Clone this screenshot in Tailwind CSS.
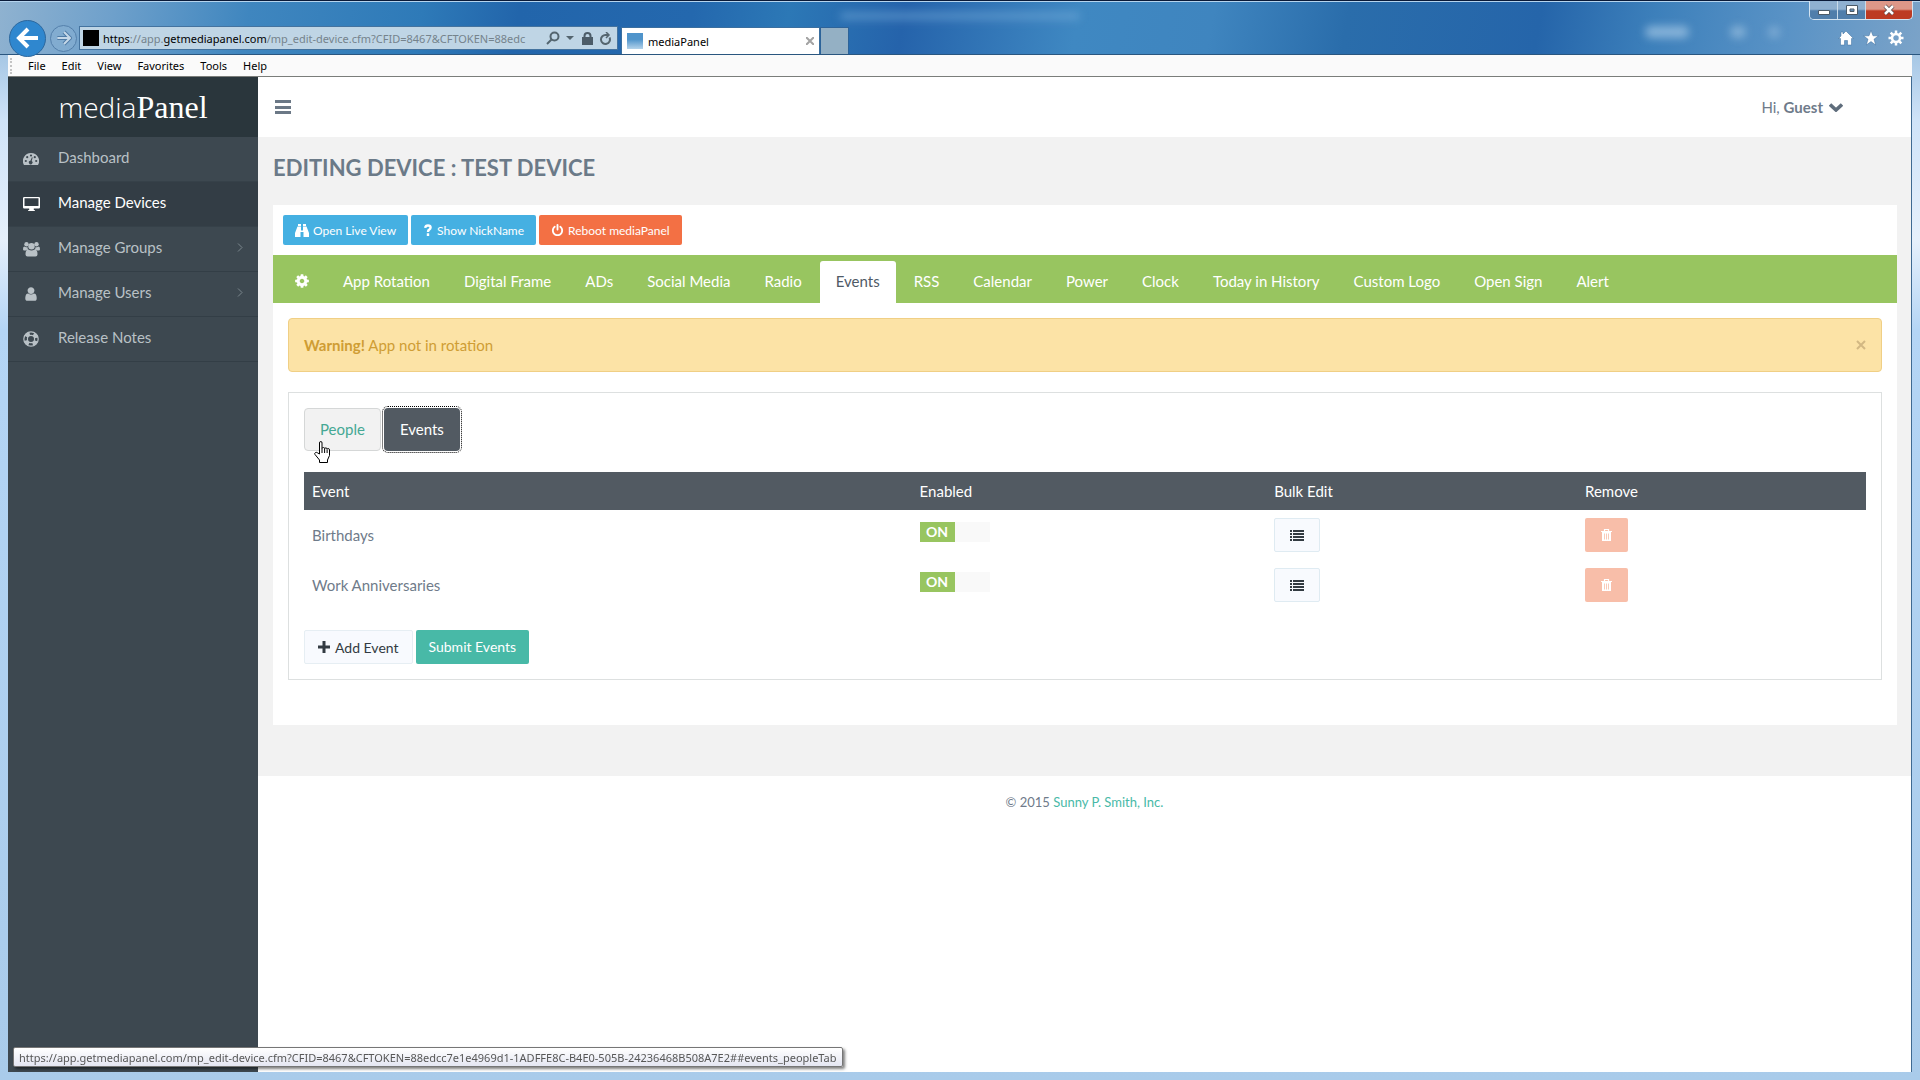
<!DOCTYPE html>
<html lang="en">
  <head>
    <meta charset="UTF-8" />
    <meta name="viewport" content="width=device-width, initial-scale=1.0" />
    <title>mediaPanel</title>
    <script src="https://cdn.jsdelivr.net/npm/@tailwindcss/browser@4"></script>
  </head>
  <body class="min-h-screen flex flex-col overflow-hidden bg-[linear-gradient(180deg,#7fb0d8_0px,#a9c9e6_60px,#cfe3f8_120px,#e6f0fb_240px,#b4d5f5_330px,#a9cbea_100%)] border-t border-[#0a1a38] px-2 pb-2 font-['Lato',sans-serif] text-[15px] leading-[21px] text-[#6f7b8a]">

    <!-- Browser window frame -->
    <header class="relative -mx-2 h-[54px] flex border-t border-[#b5d4ee] border-b border-b-[#2a567f] pl-[9px] pr-4 bg-[linear-gradient(100deg,#8fb2d0_0%,#6ea0cb_6%,#3f86bf_13%,#2e7ab8_22%,#2265ab_27%,#2468ae_36%,#2c78b6_41%,#2563ab_47%,#3f88c2_56%,#3f85bf_63%,#2a6dab_70%,#2565aa_80%,#3d80bb_86%,#5a93c6_93%,#7ba3c8_100%)] font-['Noto_Sans',sans-serif]">
      <div class="absolute left-[840px] top-2.5 h-2 w-60 rounded-full bg-[#78aedc]/50 blur-xs"></div>
      <div class="absolute left-[1645px] top-6 h-3 w-11 rounded-full bg-[#b6d3ec]/60 blur-xs"></div>
      <div class="absolute left-[1730px] top-6 h-3 w-4 rounded-full bg-[#b6d3ec]/50 blur-xs"></div>
      <div class="absolute left-[1768px] top-6 h-3 w-3 rounded-full bg-[#b6d3ec]/40 blur-xs"></div>

      <nav class="relative flex items-center pt-5 w-full">
        <button type="button" aria-label="Back" class="size-[37px] shrink-0 rounded-full bg-[#2f87cf] border border-[#2d689e] flex items-center justify-center">
          <svg class="size-6" viewBox="0 0 24 24" fill="none" stroke="#fff" stroke-width="4"><path d="M22 12H4M12 3L3 12l9 9" /></svg>
        </button>
        <button type="button" aria-label="Forward" class="ml-1 size-[27px] shrink-0 rounded-full bg-[#86afd2]/60 border border-[#5480ab] flex items-center justify-center">
          <svg class="size-4" viewBox="0 0 24 24" fill="none"><path d="M2 12h17M12 3l9 9-9 9" stroke="#4f7ba6" stroke-width="6" /><path d="M2 12h18M12 3l9 9-9 9" stroke="#c5d8e8" stroke-width="3" /></svg>
        </button>
        <div class="ml-[2px] w-[539px] h-6 shrink-0 flex items-center gap-1 border border-[#44739f] bg-[#bfd5e5] px-[3px]">
          <span class="size-4 shrink-0 bg-black"></span>
          <p class="flex-1 overflow-hidden whitespace-nowrap text-[11px] text-[#75838c]"><span class="text-black">https</span>://app.<span class="text-black">getmediapanel.com</span>/mp_edit-device.cfm?CFID=8467&amp;CFTOKEN=88edc</p>
          <svg class="size-[14px] shrink-0" viewBox="0 0 14 14" fill="none" stroke="#54656f" stroke-width="2"><circle cx="8.500" cy="5.500" r="4" /><path d="M5.500 8.500L1 13" /></svg>
          <svg class="ml-[2px] w-2 h-2 shrink-0" viewBox="0 0 8 8" fill="#54656f"><path d="M0 2h8L4 6z" /></svg>
          <svg class="ml-1 w-[11px] h-[13px] shrink-0" viewBox="0 0 11 13"><rect y="5" width="11" height="8" fill="#4c5c68" /><path d="M2.500 6V4a3 3 0 016 0v2" fill="none" stroke="#4c5c68" stroke-width="2" /></svg>
          <svg class="mx-[2px] size-[13px] shrink-0" viewBox="0 0 13 13" fill="none" stroke="#54656f" stroke-width="2"><path d="M10.500 5.500A4.500 4.500 0 1 1 7 3h2" /><path d="M7 0l3 3-3 3" stroke-width="1.500" /></svg>
        </div>
        <div class="ml-[3px] w-[199px] h-[27px] shrink-0 self-end flex items-center gap-[5px] bg-white border border-b-0 border-[#3b6f9f] px-[5px] text-[11px] text-black">
          <span class="size-4 bg-linear-to-b from-[#4f94cb] from-40% to-[#b4d3ea]"></span>
          <span class="flex-1">mediaPanel</span>
          <button type="button" aria-label="Close tab"><svg class="size-2" viewBox="0 0 8 8" stroke="#a3a3a3" stroke-width="2"><path d="M0 0l8 8M8 0L0 8" /></svg></button>
        </div>
        <button type="button" aria-label="New tab" class="w-[29px] h-[27px] shrink-0 self-end bg-[#94b0c4] border border-b-0 border-[#2d6399]"></button>
        <div class="ml-auto flex items-center gap-[9px]">
          <button type="button" aria-label="Home"><svg class="size-4" viewBox="0 0 16 16" fill="#fff" stroke="#3b6c9c" stroke-width=".5"><path d="M8 1l7.500 7.500H13.500V15H9.500v-4.500h-3V15h-4V8.500H.5L3 6V2h2v2z" /></svg></button>
          <button type="button" aria-label="Favorites"><svg class="size-4" viewBox="0 0 16 16" fill="#fff" stroke="#3b6c9c" stroke-width=".5"><path d="M8 .5l2 5.300h5.500L11 9.200l1.700 5.800L8 11.600 3.300 15 5 9.200.5 5.800H6z" /></svg></button>
          <button type="button" aria-label="Settings"><svg class="size-4" viewBox="0 0 16 16" fill="none" stroke="#fff"><circle cx="8" cy="8" r="4" stroke-width="2.500" /><path d="M8 .5v3M8 12.500v3M.5 8h3M12.500 8h3M2.700 2.700l2 2M11.300 11.300l2 2M2.700 13.300l2-2M11.300 4.700l2-2" stroke-width="2.500" /></svg></button>
        </div>
      </nav>

      <div class="absolute right-[7px] -top-px h-[19px] flex rounded-b-[5px] border border-t-0 border-[#d3e3f1] overflow-hidden divide-x divide-[#c9dbea]">
        <button type="button" aria-label="Minimize" class="w-7 flex items-center justify-center bg-linear-to-b from-[#8fb0d0] from-45% to-[#507eab] to-55%"><svg class="w-3 h-3" viewBox="0 0 12 12"><path d="M.5 6.500h11v4H.5z" fill="#fff" stroke="#4b5a68" /></svg></button>
        <button type="button" aria-label="Maximize" class="w-7 flex items-center justify-center bg-linear-to-b from-[#8fb0d0] from-45% to-[#507eab] to-55%"><svg class="w-3 h-3" viewBox="0 0 12 12"><path d="M.5 1.500h11v9H.5zM4 5v2.500h4V5z" fill="#fff" fill-rule="evenodd" stroke="#4b5a68" /></svg></button>
        <button type="button" aria-label="Close" class="w-[46px] flex items-center justify-center bg-linear-to-b from-[#dd9788] from-45% to-[#bd3a22] to-55%"><svg class="w-3 h-3" viewBox="0 0 12 12" fill="none"><path d="M2 2l8 8M10 2l-8 8" stroke="#5b4a4a" stroke-width="4" /><path d="M2 2l8 8M10 2l-8 8" stroke="#fff" stroke-width="2.500" /></svg></button>
      </div>
    </header>

    <!-- Menu bar -->
    <nav class="h-[22px] flex items-center gap-4 bg-[#fafafa] border-b border-[#7a7d7a] pl-[2px] font-['Noto_Sans',sans-serif] text-[11px] leading-4 text-black">
      <span class="h-4 border-l-2 border-dotted border-[#c4c4c4]"></span>
      <button type="button">File</button>
      <button type="button">Edit</button>
      <button type="button">View</button>
      <button type="button">Favorites</button>
      <button type="button">Tools</button>
      <button type="button">Help</button>
    </nav>

    <div class="flex-1 flex bg-white border-r border-[#3f6a92]">
      <!-- Sidebar -->
      <aside class="w-[250px] shrink-0 bg-[#3d4850] text-[#b9c1c6]">
        <a href="#" class="h-[60px] flex items-center justify-center bg-[#2a363c] text-white leading-8"><span class="font-light font-['Open_Sans',sans-serif] text-[28px]">media</span><span class="font-['Liberation_Serif',serif] text-[32px]">Panel</span></a>
        <ul>
          <li>
            <a href="#" class="h-[45px] flex items-center gap-[19px] px-[15px] pb-1 border-b border-[#364149]">
              <svg class="size-4 mt-1" viewBox="0 0 16 16" fill="currentColor"><path d="M8 2a8 8 0 00-7 12h14A8 8 0 008 2z" /><g fill="#3d4850"><circle cx="8" cy="4.500" r="1.100" /><circle cx="4.200" cy="6.200" r="1.100" /><circle cx="2.800" cy="10" r="1.100" /><circle cx="13.200" cy="10" r="1.100" /><circle cx="11.800" cy="6.200" r="1.100" /><path d="M9.700 6.500l-1 3.600a1.800 1.800 0 11-1.300-.3l1.500-3.500z" /></g></svg>
              Dashboard
            </a>
          </li>
          <li>
            <a href="#" class="h-[45px] flex items-center gap-[19px] px-[15px] pb-1 bg-[#333d45] border-b border-[#364149] text-white">
              <svg class="w-[17px] h-4 mt-1 -mr-px" viewBox="0 0 17 16" fill="currentColor"><path d="M1.200 1h14.600q1.200 0 1.200 1.200v9q0 1.300-1.200 1.300h-5v1.500h1v1H5.200v-1h1v-1.500h-5Q0 12.500 0 11.200v-9Q0 1 1.200 1zM1.500 2.300v7.700h14V2.300z" fill-rule="evenodd" /></svg>
              Manage Devices
            </a>
          </li>
          <li>
            <a href="#" class="h-[45px] flex items-center gap-[19px] px-[15px] pb-1 border-b border-[#333e46]">
              <svg class="w-[17px] h-4 mt-1 -mr-px" viewBox="0 0 17 16" fill="currentColor"><circle cx="3.500" cy="3.200" r="2.200" /><circle cx="13.500" cy="3.200" r="2.200" /><circle cx="8.500" cy="5.200" r="3.200" /><path d="M4.500 6q-.2 1.500.8 2.500-1.500 0-2.300 1H1.200Q0 9.500 0 8.200 0 5.500 1.200 5.500 3 6.800 4.500 6zM12.500 6q.2 1.500-.8 2.500 1.500 0 2.300 1h1.800q1.200 0 1.200-1.300 0-2.700-1.200-2.700-1.800 1.300-3.300.5zM5.500 8.500q3 2 6 0 3 0 3 4.500 0 2.500-2 2.500h-8q-2 0-2-2.500 0-4.500 3-4.500z" /></svg>
              <span class="flex-1">Manage Groups</span>
              <svg class="w-[6px] h-[9px]" viewBox="0 0 6 9" fill="none" stroke="#7d878d"><path d="M1 .5l4 4-4 4" /></svg>
            </a>
          </li>
          <li>
            <a href="#" class="h-[45px] flex items-center gap-[19px] px-[15px] pb-1 border-b border-[#333e46]">
              <svg class="size-4 mt-1" viewBox="0 0 1792 1792" fill="currentColor"><path d="M1536 1399q0 109-62.500 187t-150.500 78h-854q-88 0-150.500-78t-62.500-187q0-85 8.500-160.500t31.500-152 58.500-131 94-89 134.500-34.500q131 128 313 128t313-128q76 0 134.500 34.500t94 89 58.500 131 31.500 152 8.500 160.500zm-256-887q0 159-112.500 271.500t-271.500 112.500-271.500-112.500-112.500-271.500 112.500-271.500 271.500-112.500 271.500 112.500 112.500 271.500z" /></svg>
              <span class="flex-1">Manage Users</span>
              <svg class="w-[6px] h-[9px]" viewBox="0 0 6 9" fill="none" stroke="#7d878d"><path d="M1 .5l4 4-4 4" /></svg>
            </a>
          </li>
          <li>
            <a href="#" class="h-[45px] flex items-center gap-[19px] px-[15px] pb-1 border-b border-[#333e46]">
              <svg class="size-4 mt-1" viewBox="0 0 16 16" fill="none" stroke="currentColor"><circle cx="8" cy="8" r="7.200" stroke-width="1.200" /><circle cx="8" cy="8" r="3.600" stroke-width="1.200" /><circle cx="8" cy="8" r="5.500" stroke-width="3.800" stroke-dasharray="4.640 4" stroke-dashoffset="-2" /></svg>
              Release Notes
            </a>
          </li>
        </ul>
      </aside>

      <main class="flex-1 min-w-0">
        <!-- Top bar -->
        <div class="h-[60px] flex items-center justify-between pl-[17px] pr-[68px]">
          <button type="button" aria-label="Toggle menu"><svg class="w-4 h-4" viewBox="0 0 16 16" fill="#6b7886"><path d="M0 1h16v3H0zM0 7h16v3H0zM0 12h16v3H0z" /></svg></button>
          <button type="button" class="flex items-center gap-[6px]"><span>Hi, <b>Guest</b></span><svg class="w-[14px] h-[9px]" viewBox="0 0 14 9" fill="none" stroke="#5f6d7c" stroke-width="3.600"><path d="M1 1.500l6 5.500 6-5.500" /></svg></button>
        </div>

        <div class="bg-[#f2f2f2] pl-[15px] pr-[14px] pb-[51px]">
          <h1 class="h-[68px] pt-[17px] text-[22px] leading-7 font-bold text-[#6b7a88]">EDITING DEVICE : TEST DEVICE</h1>

          <section class="bg-white pt-[10px] pb-[45px]">
            <div class="flex gap-[3px] px-[10px] pb-[10px] text-[12px] text-white">
              <button type="button" class="h-[30px] flex items-center gap-1 rounded-[2px] bg-[#45b0e2] px-3">
                <svg class="w-[14px] h-[13px]" viewBox="0 0 14 13" fill="currentColor"><path d="M3 0h3v2H3zM8 0h3v2H8zM2.500 2.500H6v4h2v-4h3.500L14 9v4H8.500V8h-3v5H0V9z" /></svg>
                Open Live View
              </button>
              <button type="button" class="h-[30px] flex items-center gap-1 rounded-[2px] bg-[#45b0e2] px-3">
                <svg class="w-[10px] h-3" viewBox="0 0 10 12" fill="none" stroke="currentColor" stroke-width="2.400"><path d="M2.200 3.800Q2.500 1.500 5 1.500t2.600 2q0 1.300-1.400 2.100Q5 6.200 5 8M5 9.300V12" /></svg>
                Show NickName
              </button>
              <button type="button" class="h-[30px] flex items-center gap-1 rounded-[2px] bg-[#f37044] px-3">
                <svg class="size-[13px]" viewBox="0 0 1792 1792" fill="currentColor"><path d="M1664 896q0 156-61 298t-164 245-245 164-298 61-298-61-245-164-164-245-61-298q0-182 80.500-343t226.500-270q43-32 95.500-25t83.500 50q32 42 24.500 94.500t-49.500 84.500q-98 74-151.500 181t-53.500 228q0 104 40.500 198.500t109.500 163.500 163.500 109.500 198.500 40.500 198.500-40.500 163.500-109.500 109.500-163.500 40.500-198.500q0-121-53.500-228t-151.500-181q-42-32-49.500-84.500t24.500-94.500q31-43 84-50t95 25q146 109 226.500 270t80.500 343zm-640-768v640q0 52-38 90t-90 38-90-38-38-90v-640q0-52 38-90t90-38 90 38 38 90z" /></svg>
                Reboot mediaPanel
              </button>
            </div>

            <nav class="h-12 flex items-end gap-[2px] bg-[#98c560] pl-[6px] text-white *:h-[42px] *:flex *:items-center *:px-4 *:pb-[2px] *:rounded-t-[3px]">
              <a href="#" aria-label="Settings"><svg class="w-[14px] h-4" viewBox="128 0 1536 1792" fill="currentColor"><path d="M1152 896q0-106-75-181t-181-75-181 75-75 181 75 181 181 75 181-75 75-181zm512-109v222q0 12-8 23t-20 13l-185 28q-19 54-39 91 35 50 107 138 10 12 10 25t-9 23q-27 37-99 108t-94 71q-12 0-26-9l-138-108q-44 23-91 38-16 136-29 186-7 28-36 28h-222q-14 0-24.500-8.500t-11.500-21.500l-28-184q-49-16-90-37l-141 107q-10 9-25 9-14 0-25-11-126-114-165-168-7-10-7-23 0-12 8-23 15-21 51-66.500t54-70.500q-27-50-41-99l-183-27q-13-2-21-12.500t-8-23.500v-222q0-12 8-23t19-13l186-28q14-46 39-92-40-57-107-138-10-12-10-24 0-10 9-23 26-36 98.500-107.500t94.500-71.500q13 0 26 10l138 107q44-23 91-38 16-136 29-186 7-28 36-28h222q14 0 24.500 8.500t11.500 21.500l28 184q49 16 90 37l142-107q9-9 24-9 13 0 25 10 129 119 165 170 7 8 7 22 0 12-8 23-15 21-51 66.500t-54 70.500q26 50 41 98l183 28q13 2 21 12.500t8 23.500z" /></svg></a>
              <a href="#">App Rotation</a>
              <a href="#">Digital Frame</a>
              <a href="#">ADs</a>
              <a href="#">Social Media</a>
              <a href="#">Radio</a>
              <a href="#" aria-current="page" class="bg-white text-[#4f5a66]">Events</a>
              <a href="#">RSS</a>
              <a href="#">Calendar</a>
              <a href="#">Power</a>
              <a href="#">Clock</a>
              <a href="#">Today in History</a>
              <a href="#">Custom Logo</a>
              <a href="#">Open Sign</a>
              <a href="#">Alert</a>
            </nav>

            <div class="px-[15px] pt-[15px]">
              <div role="alert" class="h-[54px] flex items-center justify-between rounded-[4px] border border-[#f0cf85] bg-[#fce3a6] px-[15px] text-[#cf9d34]">
                <p><b>Warning!</b> App not in rotation</p>
                <button type="button" aria-label="Dismiss"><svg class="size-[10px]" viewBox="0 0 10 10" stroke="#d2b883" stroke-width="2"><path d="M1 1l8 8M9 1L1 9" /></svg></button>
              </div>

              <div class="mt-5 border border-[#dde0e0] px-[15px] py-[15px]">
                <div class="relative flex gap-[3px]">
                  <a href="#events_peopleTab" class="h-[43px] flex items-center rounded-[4px] border border-[#d5d7d7] bg-[#f2f2f2] px-[15px] pb-px text-[#45a894]">People</a>
                  <a href="#" class="h-[43px] flex items-center rounded-[4px] bg-[#525a62] px-4 pb-px text-white outline-1 outline-offset-1 outline-dotted outline-black">Events</a>
                  <!-- Hand pointer -->
                  <svg class="absolute left-[10px] top-[33px] w-[18px] h-[22px]" viewBox="0 0 18 22" fill="#fff" stroke="#000" stroke-linejoin="round"><path d="M5.500 13V2q0-1.500 1.300-1.500T8 2v5.500q.2-1 1.400-1t1.200 1.200q.2-.8 1.300-.8t1.200 1.300q.2-.7 1.200-.7T15.500 9v5.500L13.500 19v2.500h-8V19L1 13.500Q.2 12 1.500 11.500t2.300.5zM8 7.500V12M10.600 8v4M13.100 8.500V12" /></svg>
                </div>

                <table class="mt-[21px] w-full table-fixed text-left">
                  <thead class="bg-[#525a62] text-white">
                    <tr class="h-[38px] *:px-2 *:font-normal">
                      <th class="w-[38.9%]">Event</th>
                      <th class="w-[22.7%]">Enabled</th>
                      <th class="w-[19.9%]">Bulk Edit</th>
                      <th>Remove</th>
                    </tr>
                  </thead>
                  <tbody id="events"></tbody>
                </table>

                <div class="mt-5 flex gap-[3px] text-[14px]">
                  <button type="button" class="h-[34px] flex items-center gap-[5px] rounded-[2px] border border-[#e6eef3] bg-[#f8fafe] px-[13px] text-[#333b42]">
                    <svg class="w-3 h-3" viewBox="0 0 12 12" fill="currentColor"><path d="M4.500 0h3v4.500H12v3H7.500V12h-3V7.500H0v-3h4.500z" /></svg>
                    Add Event
                  </button>
                  <button type="submit" class="h-[34px] rounded-[2px] bg-[#48b9a7] px-[13px] pb-px text-white">Submit Events</button>
                </div>
              </div>
            </div>
          </section>
        </div>

        <footer class="py-4 text-center text-[13px]">&copy; 2015 <a href="#" class="text-[#48b9a7]">Sunny P. Smith, Inc.</a></footer>
      </main>
    </div>

    <!-- Link target -->
    <div class="fixed left-[13px] bottom-[13px] h-5 flex items-center rounded-[2px] border border-[#767676] bg-linear-to-b from-white to-[#e4e6f2] px-[5px] font-['Noto_Sans',sans-serif] text-[11px] text-[#575757] shadow-[2px_2px_3px_rgba(0,0,0,0.5)]">https://app.getmediapanel.com/mp_edit-device.cfm?CFID=8467&amp;CFTOKEN=88edcc7e1e4969d1-1ADFFE8C-B4E0-505B-24236468B508A7E2##events_peopleTab</div>

    <script>
      const events = ["Birthdays", "Work Anniversaries"];

      document.getElementById("events").innerHTML = events
        .map(
          (name) => `
        <tr class="h-[50px] *:px-2">
          <td>${name}</td>
          <td class="align-top pt-3">
            <label class="relative flex w-[70px] h-5 bg-[#f9f9f9]">
              <input type="checkbox" checked aria-label="${name} enabled" class="peer sr-only" />
              <span class="w-[35px] h-5 bg-[#98c560] text-center text-[14px] leading-5 font-bold text-white">ON</span>
            </label>
          </td>
          <td>
            <button type="button" aria-label="Bulk edit ${name}" class="w-[46px] h-[34px] flex items-center justify-center rounded-[2px] border border-[#dfebf2] bg-[#f8fafe] text-[#333b42]">
              <svg class="w-[14px] h-[11px]" viewBox="0 0 14 11" fill="currentColor"><path d="M0 0h2v2H0zM3 0h11v2H3zM0 3h2v2H0zM3 3h11v2H3zM0 6h2v2H0zM3 6h11v2H3zM0 9h2v2H0zM3 9h11v2H3z" /></svg>
            </button>
          </td>
          <td>
            <button type="button" aria-label="Remove ${name}" class="w-[43px] h-[34px] flex items-center justify-center rounded-[2px] bg-[#f8bea9] text-white">
              <svg class="w-[11px] h-3" viewBox="0 0 11 12"><path d="M3.500 2V.5h4V2M0 2.500h11" fill="none" stroke="currentColor" stroke-width="1.200" /><path d="M1 3h9v9H1zM3 4.500v6h.8v-6zM5.100 4.500v6h.8v-6zM7.200 4.500v6H8v-6z" fill="currentColor" fill-rule="evenodd" /></svg>
            </button>
          </td>
        </tr>`
        )
        .join("");
    </script>
  </body>
</html>
